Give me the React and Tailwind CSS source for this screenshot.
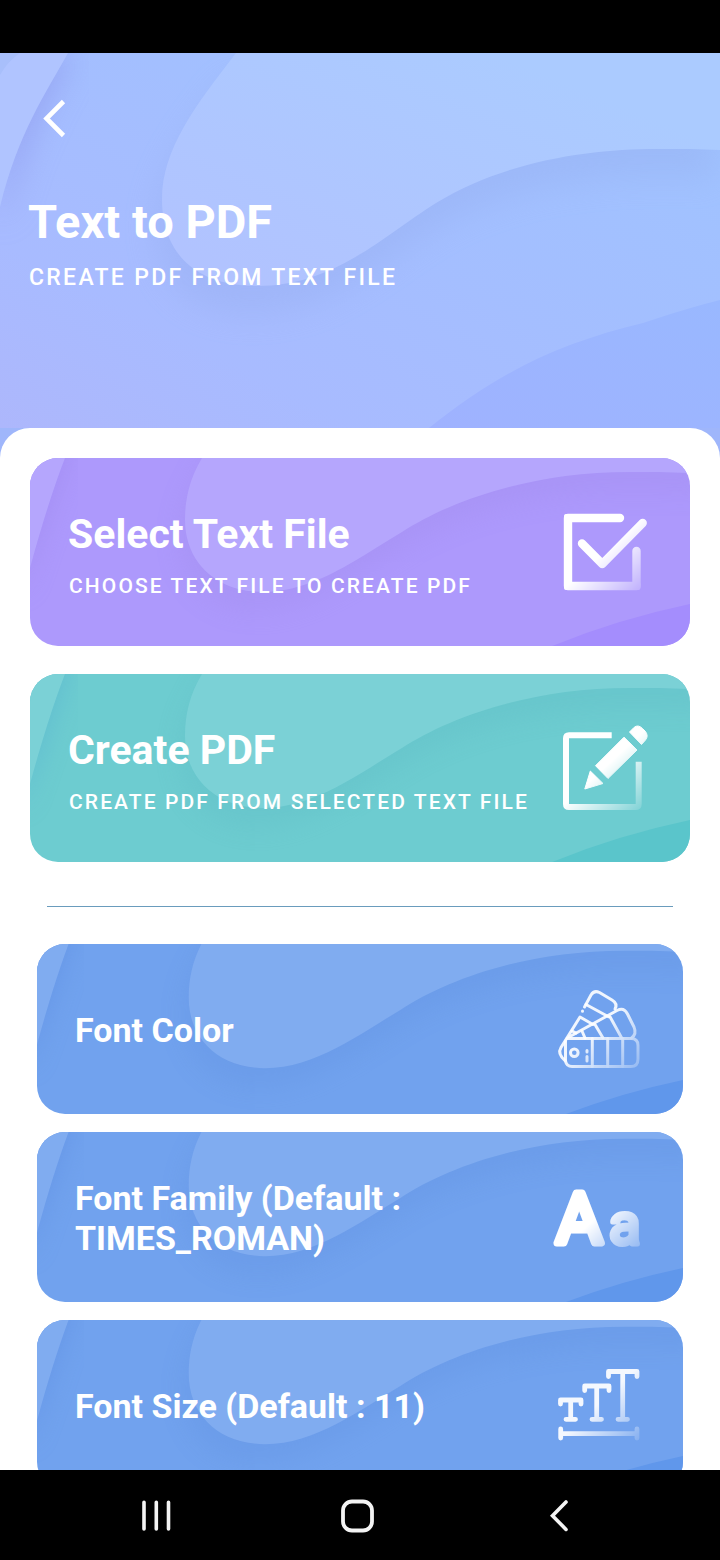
import React, { useId } from 'react';

// Wavy backdrop shared by all the cards
const CardWaves = ({ light, corner, shade, edge }) => {
  const id = useId();
  const blob =
    'M172 0 C160 20 155 40 155 62 C155 104 186 134 233 134 C284 134 330 99 372 74 C420 43 500 14 600 14 C625 14 645 14 680 16 V-20 H182 Z';

  return (
    <svg
      className="absolute inset-0 h-full w-full"
      viewBox="0 0 660 188"
      preserveAspectRatio="xMidYMid slice"
      aria-hidden="true"
    >
      <defs>
        <filter id={id} x="-20%" y="-40%" width="140%" height="200%">
          <feGaussianBlur stdDeviation="12" />
        </filter>
      </defs>
      <path d={blob} fill={shade} opacity="0.22" filter={`url(#${id})`} transform="translate(-6 20)" />
      <path d="M-10 140 L0 112 L38 0 V-20 H-10 Z" fill={edge} opacity="0.5" filter={`url(#${id})`} />
      <path d="M-10 140 L0 110 Q18 44 35 0 V-10 H-10 Z" fill={light} />
      <path d={blob} fill={light} />
      <path d="M508 194 Q584 161 670 144 V200 H508 Z" fill={corner} />
    </svg>
  );
};

const HeaderWaves = () => {
  const blob =
    'M236 0 C196 52 162 96 162 146 C162 202 198 233 257 233 C334 233 382 184 436 150 C504 108 590 96 657 96 C680 96 700 96 720 97 V0 Z';

  return (
    <svg
      className="absolute inset-0 h-full w-full"
      viewBox="0 0 720 375"
      preserveAspectRatio="none"
      aria-hidden="true"
    >
      <defs>
        <linearGradient id="header-base" x1="0" y1="1" x2="1" y2="0">
          <stop offset="0" stopColor="#adb7fc" />
          <stop offset="0.25" stopColor="#a8bbff" />
          <stop offset="0.6" stopColor="#a3bfff" />
          <stop offset="1" stopColor="#9fc4ff" />
        </linearGradient>
        <linearGradient id="header-blob" x1="0" y1="1" x2="1" y2="0">
          <stop offset="0.1" stopColor="#b1c3ff" />
          <stop offset="0.8" stopColor="#abcbff" />
        </linearGradient>
        <linearGradient id="header-corner" x1="0" y1="1" x2="1" y2="0">
          <stop offset="0" stopColor="#9fb2ff" />
          <stop offset="1" stopColor="#99b8ff" />
        </linearGradient>
        <filter id="header-blur" x="-20%" y="-20%" width="140%" height="150%">
          <feGaussianBlur stdDeviation="16" />
        </filter>
      </defs>
      <rect width="720" height="375" fill="url(#header-base)" />
      <path d={blob} fill="#8fa5e8" opacity="0.28" filter="url(#header-blur)" transform="translate(-6 28)" />
      <path d="M74 0 Q24 84 6 160 L0 170 V0 Z" fill="#8e97ec" opacity="0.6" filter="url(#header-blur)" />
      <path d="M68 0 C46 40 18 80 0 154 V0 Z" fill="#b0c4ff" />
      <path d="M20 0 Q8 8 0 22 V0 Z" fill="#a8bffb" />
      <path d={blob} fill="url(#header-blob)" />
      <path d="M429 375 C500 318 560 290 643 270 Q684 256 720 247 V375 Z" fill="url(#header-corner)" />
    </svg>
  );
};

// Icons fade out towards the bottom right corner
const FadeIcon = ({ id, end = 0.3, children }) => (
  <svg className="h-24 w-24 shrink-0" viewBox="0 0 96 96" fill="none" aria-hidden="true">
    <defs>
      <linearGradient id={id} gradientUnits="userSpaceOnUse" x1="34" y1="34" x2="84" y2="88">
        <stop offset="0.25" stopColor="#fff" />
        <stop offset="1" stopColor="#fff" stopOpacity={end} />
      </linearGradient>
      <mask id={`${id}-mask`} maskUnits="userSpaceOnUse" x="0" y="0" width="96" height="96">
        <rect width="96" height="96" fill={`url(#${id})`} />
      </mask>
    </defs>
    <g mask={`url(#${id}-mask)`}>{children}</g>
  </svg>
);

const CheckIcon = () => (
  <FadeIcon id="fade-check" end={0.2}>
    <g stroke="#fff" strokeWidth="8.4" strokeLinecap="round" strokeLinejoin="round">
      <path d="M62 14 H10 V82 H78.5 V47" />
      <path d="M24 39.5 L44.3 60 L84.7 19" />
      <path d="M8 16 V12 H12 M8 80 V84 H12 M76 84 H80.5 V80" strokeWidth="4" />
    </g>
  </FadeIcon>
);

const PencilIcon = () => (
  <FadeIcon id="fade-pencil" end={0.15}>
    <path
      d="M53.7 15.3 H11 Q8 15.3 8 18.3 V84 Q8 87 11 87 H77.5 Q80.7 87 80.7 84 V41.7"
      stroke="#fff"
      strokeWidth="6"
      strokeLinejoin="round"
    />
    <g fill="#fff" stroke="#fff" strokeLinejoin="round">
      <path d="M37.5 45.7 L66 17.2 L79 30 L50 58.5 Z" />
      <path d="M71.5 12 L76 7.5 Q80 4 84.5 8.5 L87 11 Q91 15.5 87.5 20 L83.5 24.5 Z" />
      <path d="M32.3 51 L45 63.5 L26.8 69 Z" />
    </g>
  </FadeIcon>
);

const SwatchIcon = () => (
  <FadeIcon id="fade-swatch" end={0.3}>
    <g stroke="#fff" strokeOpacity="0.9" strokeWidth="3" strokeLinecap="round" strokeLinejoin="round">
      <path d="M16 57.5 H80 Q87 57.5 87 64.5 V78 Q87 85.5 80 85.5 H21 Q15.5 85.5 14.5 80 V60" />
      <path d="M14.5 80 Q6 73 10 66.5 L29 36 L42 43.5" />
      <path d="M41.3 57.5 V85.5 M56.7 57.5 V85.5 M71.7 57.5 V85.5" />
      <circle cx="23.3" cy="71.7" r="3.8" />
      <path d="M36 69.5 V71 M36 75.5 V80" />
      <path d="M31.5 30 V30.2 M33.5 26 L40 14 Q43 9 48.5 11.5 L61 19 Q67 22.5 64 28" />
      <path d="M35 23.5 L57.5 35.7" />
      <path d="M18 56 L66 29.5 Q73 26 76.5 33 L83 46 Q86 53 80.5 57" />
      <path d="M44 43.5 L52 57 M59 35.7 L70.7 57 M21 50 L25 52 M31 50 L34 57" />
    </g>
  </FadeIcon>
);

const LettersIcon = () => (
  <FadeIcon id="fade-letters" end={0.2}>
    <g
      fill="#fff"
      stroke="#fff"
      strokeLinejoin="round"
      fontFamily="'Roboto', sans-serif"
      fontWeight="400"
    >
      <text x="5" y="74" fontSize="71" strokeWidth="7">A</text>
      <text x="58" y="75" fontSize="58" strokeWidth="5">a</text>
    </g>
  </FadeIcon>
);

const SizeIcon = () => (
  <FadeIcon id="fade-size" end={0.15}>
    <g stroke="#fff" strokeOpacity="0.92" strokeWidth="4.8" strokeLinecap="round" strokeLinejoin="round">
      <path d="M9.5 47 V43 H30 V47 M19.7 43 V62 M15 62.3 H24.5" />
      <path d="M33.7 33.5 V29 H58 V33.5 M45.7 29 V62 M41 62.3 H50.5" />
      <path d="M57.5 19.5 V14.5 H86 V19.5 M71.7 14.5 V62 M67 62.3 H76.5" />
      <path d="M9.7 72 V81 M9.7 76.7 H86 M86 72 V81" />
    </g>
  </FadeIcon>
);

const actions = [
  {
    title: 'Select Text File',
    subtitle: 'CHOOSE TEXT FILE TO CREATE PDF',
    icon: CheckIcon,
    base: 'bg-[#ad99fc]',
    waves: { light: '#b5a6fd', corner: '#a48dfd', shade: '#9b86e6', edge: '#9d88ee' },
  },
  {
    title: 'Create PDF',
    subtitle: 'CREATE PDF FROM SELECTED TEXT FILE',
    icon: PencilIcon,
    base: 'bg-[#6dccd0]',
    waves: { light: '#7bd1d6', corner: '#5ac5cb', shade: '#5ab4c0', edge: '#58b2d2' },
  },
];

const options = [
  { title: 'Font Color', icon: SwatchIcon },
  { title: 'Font Family (Default : TIMES_ROMAN)', icon: LettersIcon },
  { title: 'Font Size (Default : 11)', icon: SizeIcon },
];

const optionWaves = { light: '#80acf0', corner: '#6097eb', shade: '#5b8bdc', edge: '#5f90e2' };

const ActionCard = ({ title, subtitle, icon: Icon, base, waves }) => (
  <button
    type="button"
    className={`relative flex min-h-[188px] w-full items-center overflow-hidden rounded-[28px] pl-[38px] pr-9 text-left text-white ${base}`}
  >
    <CardWaves {...waves} />
    <span className="relative flex flex-1 flex-col gap-4 pt-1">
      <span className="text-[41px] leading-[48px] font-bold">{title}</span>
      <span className="pl-px text-[21px] leading-6 font-medium tracking-widest whitespace-nowrap">{subtitle}</span>
    </span>
    <span className="relative">
      <Icon />
    </span>
  </button>
);

const OptionCard = ({ title, icon: Icon }) => (
  <button
    type="button"
    className="relative flex min-h-[170px] w-full items-center overflow-hidden rounded-[28px] bg-[#71a2ee] pl-[38px] pr-9 text-left text-white"
  >
    <CardWaves {...optionWaves} />
    <span className="relative flex-1 pt-0.5 text-[34px] leading-10 font-bold">{title}</span>
    <span className="relative">
      <Icon />
    </span>
  </button>
);

const NavBar = () => (
  <nav className="flex h-[90px] shrink-0 items-center bg-black pt-0.5 pl-14 pr-[62px] text-[#f4f4f4]">
    <button type="button" aria-label="Recent apps" className="flex flex-1 justify-center">
      <svg className="h-9 w-9" viewBox="0 0 36 36" stroke="currentColor" strokeWidth="3.6" strokeLinecap="round">
        <path d="M6 4.2 V31 M18.3 4.2 V31 M30.5 4.2 V31" />
      </svg>
    </button>
    <button type="button" aria-label="Home" className="flex flex-1 justify-center">
      <svg className="h-9 w-9" viewBox="0 0 36 36" fill="none" stroke="currentColor" strokeWidth="3.8">
        <rect x="4" y="3.5" width="29" height="29" rx="9" />
      </svg>
    </button>
    <button type="button" aria-label="Back" className="flex flex-1 justify-center">
      <svg className="h-9 w-9" viewBox="0 0 36 36" fill="none" stroke="currentColor" strokeWidth="3.6" strokeLinecap="round">
        <path d="M26 4 L12.5 17.7 L26 31.4" />
      </svg>
    </button>
  </nav>
);

export default function App() {
  return (
    <div className="flex h-screen flex-col bg-black font-['Roboto',sans-serif]">
      {/* Status bar */}
      <div className="h-[53px] shrink-0" />

      <main className="min-h-0 flex-1 overflow-y-auto bg-[#9fb6fb] [scrollbar-width:none]">
        {/* Header */}
        <header className="relative px-7 pt-10 pb-[136px] text-white">
          <HeaderWaves />
          <button type="button" aria-label="Go back" className="relative block">
            <svg className="h-[50px] w-[50px]" viewBox="0 0 50 50" fill="none" stroke="currentColor" strokeWidth="4.6">
              <path d="M35.5 8.5 L18.5 25.5 L35.5 42.5" />
            </svg>
          </button>
          <h1 className="relative pt-[51px] text-[47px] leading-[56px] font-bold">Text to PDF</h1>
          <p className="relative pt-[14px] pl-px text-[23px] leading-7 font-medium tracking-widest">
            CREATE PDF FROM TEXT FILE
          </p>
        </header>

        {/* Sheet */}
        <div className="rounded-t-[30px] bg-white px-[30px] py-[30px]">
          <div className="flex flex-col gap-7">
            {actions.map((action) => (
              <ActionCard key={action.title} {...action} />
            ))}
          </div>

          <hr className="mx-[17px] mt-11 mb-[37px] border-[#6a9cbd]" />

          <div className="flex flex-col gap-[18px] px-[7px]">
            {options.map((option) => (
              <OptionCard key={option.title} {...option} />
            ))}
          </div>
        </div>
      </main>

      <NavBar />
    </div>
  );
}
